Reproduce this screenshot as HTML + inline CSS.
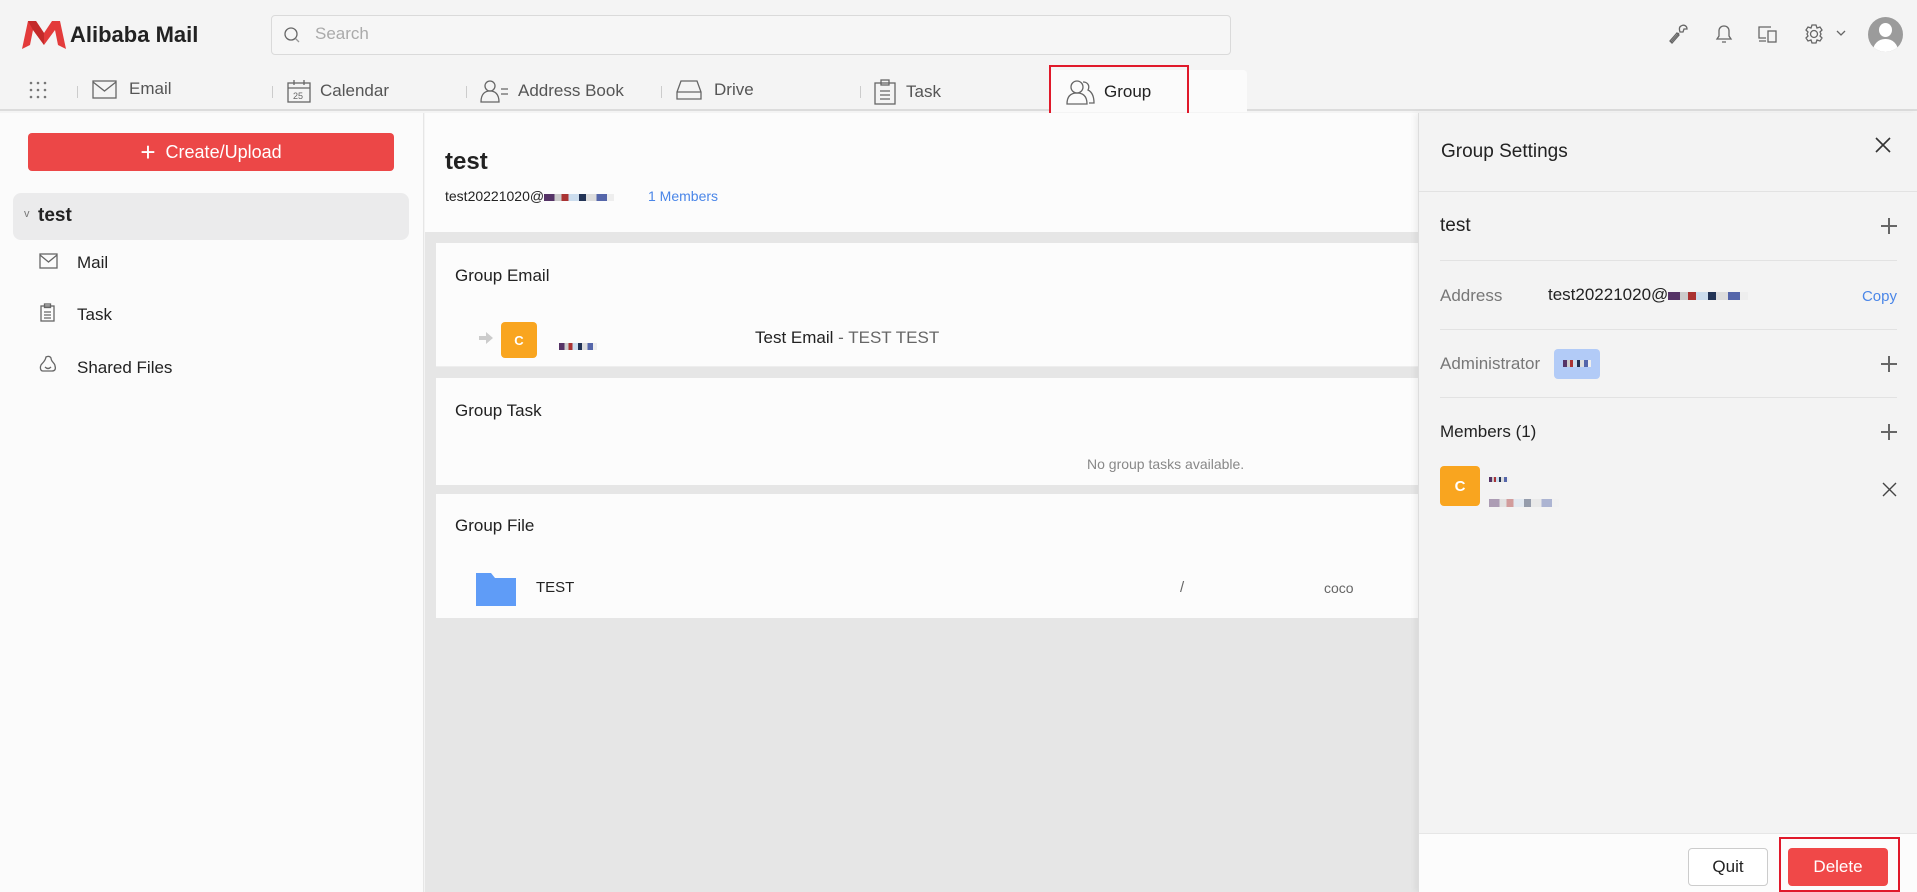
<!DOCTYPE html>
<html><head><meta charset="utf-8"><style>
*{box-sizing:border-box;margin:0;padding:0}
body{width:1917px;height:892px;overflow:hidden;font-family:"Liberation Sans",Arial,sans-serif;background:#f4f4f4;position:relative;color:#222}
.a{position:absolute}
.tab{position:absolute;top:79px;font-size:17px;color:#555;display:flex;align-items:center;gap:8px}
.sep{position:absolute;top:86px;width:1px;height:12px;background:#ccc}
svg{display:block}
.ico{stroke:#666;fill:none;stroke-width:1.3}
.card{position:absolute;left:436px;width:982px;background:#fcfcfc}
.ct{position:absolute;left:19px;font-size:17px;color:#222}
.plus{position:absolute;right:20px;width:16px;height:16px}
.plus:before,.plus:after{content:"";position:absolute;background:#666}
.plus:before{left:7px;top:0;width:1.5px;height:16px}
.plus:after{top:7px;left:0;height:1.5px;width:16px}
.hr{position:absolute;left:21px;right:20px;height:1px;background:#e2e2e2}
.blur{display:inline-block;height:7px;background:linear-gradient(90deg,#536 0 15%,#ccc 15% 25%,#a33 25% 35%,#cde 35% 50%,#235 50% 60%,#ddd 60% 75%,#56a 75% 90%,#eee 90%)}
</style></head><body>
<!-- header -->
<div class="a" style="left:0;top:0;width:1917px;height:111px;background:#f4f4f4;border-bottom:2px solid #dcdcdc"></div>
<svg class="a" style="left:22px;top:21px" width="44" height="29" viewBox="0 0 44 29"><path d="M0 28 L6 0 L14 0 L22 12 L30 0 L38 0 L44 28 L36 24 L33 9 L22 24 L11 9 L8 24 Z" fill="#e33b3b"/><path d="M6 0 L14 0 L22 12 L22 24 L11 9 Z" fill="#c42a2a"/></svg>
<div class="a" style="left:70px;top:22px;font-size:22px;font-weight:bold;color:#222">Alibaba Mail</div>
<div class="a" style="left:271px;top:15px;width:960px;height:40px;border:1px solid #dadada;border-radius:4px;background:#f6f6f6"></div>
<svg class="a" style="left:283px;top:26px" width="18" height="18"><circle cx="8" cy="8" r="6" class="ico" stroke="#999"/><path d="M12.5 12.5 L16 16" stroke="#999" stroke-width="1.3"/></svg>
<div class="a" style="left:315px;top:24px;font-size:17px;color:#aaa">Search</div>
<!-- tabs -->
<svg class="a" style="left:28px;top:80px" width="20" height="20"><g fill="#777"><circle cx="3" cy="3" r="1.3"/><circle cx="10" cy="3" r="1.3"/><circle cx="17" cy="3" r="1.3"/><circle cx="3" cy="10" r="1.3"/><circle cx="10" cy="10" r="1.3"/><circle cx="17" cy="10" r="1.3"/><circle cx="3" cy="17" r="1.3"/><circle cx="17" cy="17" r="1.3"/><circle cx="10" cy="17" r="1.3"/></g></svg>
<div class="sep" style="left:77px"></div>
<div class="tab" style="left:92px"><svg width="25" height="20"><rect x="1" y="2" width="23" height="17" class="ico"/><path d="M1 3 L12.5 12 L24 3" class="ico"/></svg><span style="margin-left:4px">Email</span></div>
<div class="sep" style="left:272px"></div>
<div class="tab" style="left:287px"><svg width="25" height="24"><rect x="1" y="4" width="22" height="19" class="ico"/><path d="M1 9 H23 M7 1 V6 M17 1 V6" class="ico"/><text x="6" y="20" font-size="9" fill="#666" font-family="Liberation Sans">25</text></svg><span>Calendar</span></div>
<div class="sep" style="left:466px"></div>
<div class="tab" style="left:480px"><svg width="30" height="24"><circle cx="10" cy="7" r="5" class="ico"/><path d="M1 23 C1 15 5 12 10 12 C15 12 19 15 19 23 Z" class="ico"/><path d="M21 10 H28 M21 15 H28" class="ico"/></svg><span>Address Book</span></div>
<div class="sep" style="left:661px"></div>
<div class="tab" style="left:676px"><svg width="26" height="22"><path d="M5 2 H21 L25 13 V20 H1 V13 Z M1 13 H25" class="ico"/></svg><span style="margin-left:4px">Drive</span></div>
<div class="sep" style="left:860px"></div>
<div class="tab" style="left:874px"><svg width="22" height="26"><rect x="1" y="4" width="20" height="21" class="ico"/><rect x="7" y="1" width="8" height="5" class="ico"/><path d="M6 12 H16 M6 16 H16 M6 20 H16" class="ico"/></svg><span style="margin-left:2px">Task</span></div>
<div class="a" style="left:1049px;top:70px;width:198px;height:42px;background:#fbfbfb;border-radius:4px 4px 0 0"></div>
<div class="a" style="left:1049px;top:65px;width:140px;height:50px;border:2px solid #e0192a"></div>
<div class="tab" style="left:1066px;color:#222"><svg width="30" height="26"><circle cx="11" cy="8" r="6" class="ico" stroke="#333"/><path d="M1 25 C1 16 6 14 11 14 C16 14 21 16 21 25 Z" class="ico" stroke="#333"/><path d="M17 3 C22 3 24 7 22 11 C26 13 28 17 28 24 H23" class="ico" stroke="#333"/></svg><span>Group</span></div>
<!-- top-right icons -->
<svg class="a" style="left:1668px;top:23px" width="20" height="22"><path d="M3 19 L11 10 M13 3 C16 1 19 3 19 6 L16 6 L15 9 L12 9 C11 6 11 4 13 3 Z M2 18 L4 20 L11 12 L9 10 Z" class="ico" stroke="#444"/></svg>
<svg class="a" style="left:1714px;top:23px" width="20" height="22"><path d="M3 16 H17 L15 13 V8 C15 5 13 3 10 3 C7 3 5 5 5 8 V13 Z M8 19 H12" class="ico" stroke="#444" stroke-width="1.5"/></svg>
<svg class="a" style="left:1757px;top:24px" width="22" height="20"><path d="M14 3 H2 V14 H9 M2 17 H9" class="ico" stroke="#444" stroke-width="1.5"/><rect x="11" y="7" width="8" height="11" class="ico" stroke="#444" stroke-width="1.5"/></svg>
<svg class="a" style="left:1803px;top:23px" width="22" height="22"><circle cx="11" cy="11" r="3.5" class="ico" stroke="#444" stroke-width="1.5"/><path d="M9 2 H13 L14 5 L17 4 L19 7 L17 9 L18 11 L17 13 L19 15 L17 18 L14 17 L13 20 H9 L8 17 L5 18 L3 15 L5 13 L4 11 L5 9 L3 7 L5 4 L8 5 Z" class="ico" stroke="#444" stroke-width="1.4"/></svg>
<svg class="a" style="left:1836px;top:30px" width="10" height="7"><path d="M1 1 L5 5 L9 1" class="ico" stroke="#555"/></svg>
<div class="a" style="left:1868px;top:17px;width:35px;height:35px;border-radius:50%;background:#9b9b9b;overflow:hidden"><div class="a" style="left:11px;top:6px;width:13px;height:14px;border-radius:50%;background:#fff"></div><div class="a" style="left:5px;top:22px;width:25px;height:14px;border-radius:12px 12px 0 0;background:#fff"></div></div>
<!-- sidebar -->
<div class="a" style="left:0;top:113px;width:424px;height:779px;background:#fbfbfb;border-right:1px solid #e6e6e6"></div>
<div class="a" style="left:28px;top:133px;width:366px;height:38px;background:#ec4747;border-radius:4px;color:#fff;font-size:18px;display:flex;align-items:center;justify-content:center"><span style="font-size:26px;font-weight:300;margin-right:10px;line-height:1">+</span>Create/Upload</div>
<div class="a" style="left:13px;top:193px;width:396px;height:47px;background:#ebebec;border-radius:8px"></div>
<div class="a" style="left:24px;top:208px;font-size:11px;color:#777">v</div>
<div class="a" style="left:38px;top:205px;font-size:19px;font-weight:bold">test</div>
<svg class="a" style="left:39px;top:253px" width="19" height="16"><rect x="1" y="1" width="17" height="14" class="ico" stroke="#777"/><path d="M1 2 L9.5 9 L18 2" class="ico" stroke="#777"/></svg>
<div class="a" style="left:77px;top:253px;font-size:17px">Mail</div>
<svg class="a" style="left:40px;top:303px" width="15" height="19"><rect x="1" y="3" width="13" height="15" class="ico" stroke="#777"/><rect x="4.5" y="1" width="6" height="3.5" class="ico" stroke="#777"/><path d="M4 9 H11 M4 12 H11 M4 15 H11" class="ico" stroke="#777"/></svg>
<div class="a" style="left:77px;top:305px;font-size:17px">Task</div>
<svg class="a" style="left:39px;top:355px" width="18" height="18"><path d="M4 16 C1 16 1 12 2 10 C3 8 6 7 7 2 C9 1 11 1 12 3 C12 7 16 8 16 11 C17 14 16 16 13 16 Z M6 12 C8 14 10 14 12 12" class="ico" stroke="#777"/></svg>
<div class="a" style="left:77px;top:358px;font-size:17px">Shared Files</div>
<!-- main -->
<div class="a" style="left:425px;top:113px;width:993px;height:779px;background:#e6e6e6"></div>
<div class="a" style="left:425px;top:113px;width:993px;height:119px;background:#fcfcfc"></div>
<div class="a" style="left:445px;top:148px;font-size:24px;font-weight:bold">test</div>
<div class="a" style="left:445px;top:188px;font-size:14px">test20221020@<span class="blur" style="width:70px"></span></div>
<div class="a" style="left:648px;top:188px;font-size:14px;color:#4a86e8">1 Members</div>
<div class="card" style="top:243px;height:124px;border-bottom:1px solid #eee"><div class="ct" style="top:23px">Group Email</div>
<svg class="a" style="left:43px;top:89px" width="14" height="12"><path d="M0 4 H7 V0 L14 6 L7 12 V8 H0 Z" fill="#ccc"/></svg>
<div class="a" style="left:65px;top:79px;width:36px;height:36px;background:#f9a51f;border-radius:4px;color:#fff;font-size:13px;font-weight:bold;display:flex;align-items:center;justify-content:center">C</div>
<div class="a" style="left:123px;top:94px"><span class="blur" style="width:38px"></span></div>
<div class="a" style="left:319px;top:85px;font-size:17px">Test Email <span style="color:#666">- TEST TEST</span></div></div>
<div class="card" style="top:378px;height:107px"><div class="ct" style="top:23px">Group Task</div>
<div class="a" style="left:651px;top:78px;font-size:14px;color:#888">No group tasks available.</div></div>
<div class="card" style="top:494px;height:124px"><div class="ct" style="top:22px">Group File</div>
<svg class="a" style="left:40px;top:79px" width="40" height="33"><path d="M0 0 H15 L19 5 H40 V33 H0 Z" fill="#5f9cf7"/></svg>
<div class="a" style="left:100px;top:85px;font-size:15px">TEST</div>
<div class="a" style="left:744px;top:85px;font-size:15px;color:#666">/</div>
<div class="a" style="left:888px;top:86px;font-size:14px;color:#666">coco</div></div>
<!-- right panel -->
<div class="a" style="left:1418px;top:113px;width:499px;height:779px;background:#f3f3f3;border-left:1px solid #ddd;box-shadow:-3px 0 6px rgba(0,0,0,.06)">
<div class="a" style="left:22px;top:28px;font-size:19px">Group Settings</div>
<svg class="a" style="left:456px;top:24px" width="16" height="16"><path d="M1 1 L15 15 M15 1 L1 15" stroke="#333" stroke-width="1.6"/></svg>
<div class="a" style="left:0;right:0;top:78px;height:1px;background:#e2e2e2"></div>
<div class="a" style="left:21px;top:102px;font-size:19px">test</div><div class="plus" style="top:105px"></div>
<div class="hr" style="top:147px"></div>
<div class="a" style="left:21px;top:173px;font-size:17px;color:#777">Address</div>
<div class="a" style="left:129px;top:172px;font-size:17px">test20221020@<span class="blur" style="width:80px;height:8px"></span></div>
<div class="a" style="right:20px;top:175px;font-size:15px;color:#4a86e8">Copy</div>
<div class="hr" style="top:216px"></div>
<div class="a" style="left:21px;top:241px;font-size:17px;color:#777">Administrator</div>
<div class="a" style="left:135px;top:236px;width:46px;height:30px;background:#b2cbf7;border-radius:4px"><span class="blur" style="position:absolute;left:9px;top:11px;width:28px"></span></div>
<div class="plus" style="top:243px"></div>
<div class="hr" style="top:284px"></div>
<div class="a" style="left:21px;top:309px;font-size:17px">Members (1)</div><div class="plus" style="top:311px"></div>
<div class="a" style="left:21px;top:353px;width:40px;height:40px;background:#f9a51f;border-radius:4px;color:#fff;font-size:15px;font-weight:bold;display:flex;align-items:center;justify-content:center">C</div>
<div class="a" style="left:70px;top:356px"><span class="blur" style="width:20px;height:5px"></span></div>
<div class="a" style="left:70px;top:381px"><span class="blur" style="width:70px;height:8px;opacity:.45"></span></div>
<svg class="a" style="left:463px;top:369px" width="15" height="15"><path d="M1 1 L14 14 M14 1 L1 14" stroke="#444" stroke-width="1.4"/></svg>
<div class="a" style="left:0;right:0;top:720px;height:59px;background:#fcfcfc;border-top:1px solid #e6e6e6"></div>
<div class="a" style="left:269px;top:735px;width:80px;height:38px;border:1px solid #ccc;border-radius:4px;background:#fff;font-size:17px;display:flex;align-items:center;justify-content:center">Quit</div>
<div class="a" style="left:360px;top:724px;width:121px;height:55px;border:2px solid #e0192a"></div>
<div class="a" style="left:369px;top:735px;width:100px;height:38px;border-radius:4px;background:#f04848;color:#fff;font-size:17px;display:flex;align-items:center;justify-content:center">Delete</div>
</div>
</body></html>
